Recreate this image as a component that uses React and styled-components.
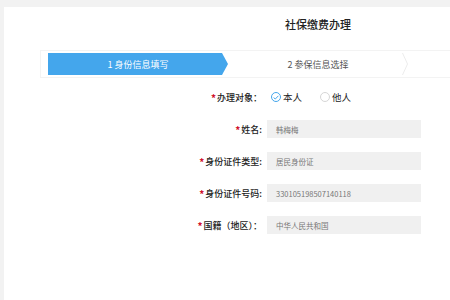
import React from 'react';
import styled, { createGlobalStyle, css } from 'styled-components';

const GlobalStyle = createGlobalStyle`
  html, body {
    margin: 0;
    padding: 0;
    background: #f2f2f2;
    overflow: hidden;
    font-family: "Noto Sans CJK SC", "Liberation Sans", sans-serif;
  }
`;

const Page = styled.div`
  width: 450px;
  height: 300px;
  overflow: hidden;
  padding: 7px 0 0 4px;
  box-sizing: border-box;
`;

const Card = styled.div`
  width: 628px;
  height: 300px;
  background: #fff;
  padding-top: 8px;
  box-sizing: border-box;
`;

const Title = styled.h1`
  margin: 0;
  font-size: 11px;
  line-height: 18px;
  font-weight: 500;
  color: #222;
  text-align: center;
`;

const StepBar = styled.div`
  display: flex;
  margin: 17px 0 0 36px;
  width: 556px;
  height: 28px;
  box-sizing: border-box;
  padding: 2px 7px;
  border: 1px solid #f3f3f3;
`;

const Step = styled.div`
  position: relative;
  flex: 1;
  display: flex;
  align-items: center;
  justify-content: center;
  font-size: 9px;
  color: #555;

  ${props =>
    props.active &&
    css`
      background: #44a6ec;
      color: #fff;
      clip-path: polygon(0 0, calc(100% - 6px) 0, 100% 50%, calc(100% - 6px) 100%, 0 100%);
    `};
`;

const Chevron = styled.svg`
  position: absolute;
  right: 0;
  top: 0;
`;

const Form = styled.div`
  display: grid;
  grid-template-columns: 72px 154px;
  grid-auto-rows: 18px;
  column-gap: 5px;
  row-gap: 14px;
  margin: 10px 0 0 186px;
`;

const Label = styled.div`
  display: flex;
  align-items: center;
  justify-content: flex-end;
  font-size: 9px;
  font-weight: 500;
  color: #222;
  white-space: nowrap;
`;

const Star = styled.span`
  color: #d0112b;
  font-size: 10px;
  font-weight: 700;
  margin-right: 1px;
`;

const Field = styled.div`
  display: flex;
  align-items: center;
  padding-left: 9px;
  background: #f0f0f0;
  font-size: 7.5px;
  color: #777;
`;

const Radios = styled.div`
  display: flex;
  align-items: center;
  gap: 18px;
  padding-left: 4px;
`;

const RadioOption = styled.label`
  display: flex;
  align-items: center;
  gap: 2px;
  font-size: 9.5px;
  color: #222;
`;

const Circle = styled.span`
  display: flex;
  align-items: center;
  justify-content: center;
  width: 10px;
  height: 10px;
  box-sizing: border-box;
  border-radius: 50%;
  border: 1px solid ${props => (props.checked ? '#44a6ec' : '#d6d6d6')};
`;

const Radio = ({ checked, children }) => (
  <RadioOption>
    <Circle checked={checked}>
      {checked && (
        <svg width="6" height="5" viewBox="0 0 6 5">
          <polyline points="0.6,2.6 2.3,4 5.4,0.8" fill="none" stroke="#44a6ec" strokeWidth="1" />
        </svg>
      )}
    </Circle>
    {children}
  </RadioOption>
);

const rows = [
  { label: '姓名:', value: '韩梅梅' },
  { label: '身份证件类型:', value: '居民身份证' },
  { label: '身份证件号码:', value: '330105198507140118' },
  { label: '国籍（地区）：', value: '中华人民共和国' },
];

const App = () => (
  <Page>
    <GlobalStyle />
    <Card>
      <Title>社保缴费办理</Title>
      <StepBar>
        <Step active>1 身份信息填写</Step>
        <Step>
          2 参保信息选择
          <Chevron width="6" height="22" viewBox="0 0 6 22">
            <polyline points="0.5,0 5.5,11 0.5,22" fill="none" stroke="#ececec" strokeWidth="1" />
          </Chevron>
        </Step>
        <Step />
      </StepBar>
      <Form>
        <Label>
          <Star>*</Star>办理对象：
        </Label>
        <Radios>
          <Radio checked>本人</Radio>
          <Radio>他人</Radio>
        </Radios>
        {rows.map(row => (
          <React.Fragment key={row.label}>
            <Label>
              <Star>*</Star>
              {row.label}
            </Label>
            <Field>{row.value}</Field>
          </React.Fragment>
        ))}
      </Form>
    </Card>
  </Page>
);

export default App;
